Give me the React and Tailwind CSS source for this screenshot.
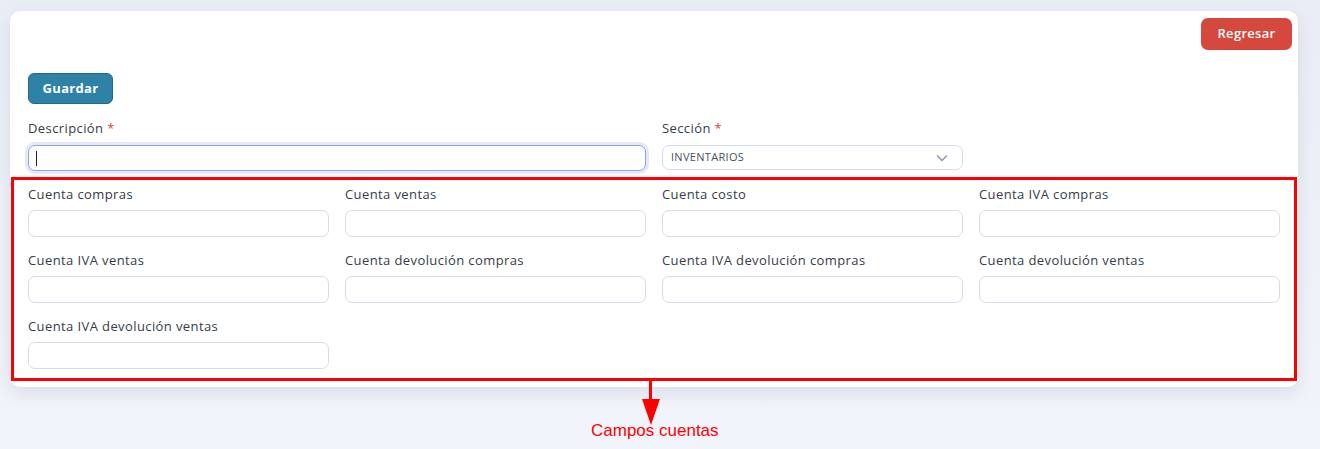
import React from "react";

const cuentas = [
  "Cuenta compras",
  "Cuenta ventas",
  "Cuenta costo",
  "Cuenta IVA compras",
  "Cuenta IVA ventas",
  "Cuenta devolución compras",
  "Cuenta IVA devolución compras",
  "Cuenta devolución ventas",
  "Cuenta IVA devolución ventas",
];

function Field({ label }) {
  return (
    <div className="flex flex-col">
      <label className="text-[13px] font-medium tracking-[0.4px] text-[#363c4a] leading-[18px] h-[18px]">
        {label}
      </label>
      <input
        type="text"
        className="mt-[7px] h-[27px] w-full rounded-[7px] border border-[#d5dcea] bg-white px-2 text-[13px] outline-none"
      />
    </div>
  );
}

export default function App() {
  return (
    <div
      className="relative h-[449px] w-[1320px] overflow-hidden bg-gradient-to-b from-[#eaedf5] to-[#f1f4fa]"
      style={{ fontFamily: '"Open Sans", "Liberation Sans", sans-serif' }}
    >
      <div className="pt-[11px] pl-[10px] pr-[22px]">
        <div className="rounded-[10px] bg-white px-[18px] pt-[7px] pb-[18px] shadow-[0_6px_16px_rgba(120,130,160,0.18)]">
          {/* top actions */}
          <div className="flex justify-end">
            <button className="mr-[-12px] h-[32px] w-[91px] rounded-[7px] bg-[#d4483e] text-[13px] font-semibold tracking-[0.3px] text-white">
              Regresar
            </button>
          </div>
          <div className="mt-[23px]">
            <button className="h-[31px] w-[85px] rounded-[6px] border border-[#24698a] bg-[#2e82a7] text-[13px] font-bold tracking-[0.3px] text-white">
              Guardar
            </button>
          </div>

          {/* descripción / sección */}
          <div className="mt-[15px] grid grid-cols-4 gap-x-[16px]">
            <div className="col-span-2 flex flex-col">
              <label className="text-[13px] font-medium tracking-[0.4px] text-[#363c4a] leading-[18px] h-[18px]">
                Descripción <span className="text-[#e0433a]">*</span>
              </label>
              <div className="mt-[8px] h-[26px] rounded-[7px] border border-[#8fa3ec] bg-white shadow-[0_0_0_3px_#e4e8f8] flex items-center px-[7px]">
                <span className="h-[15px] w-px bg-[#222]" />
              </div>
            </div>
            <div className="flex flex-col">
              <label className="text-[13px] font-medium tracking-[0.4px] text-[#363c4a] leading-[18px] h-[18px]">
                Sección <span className="text-[#e0433a]">*</span>
              </label>
              <div className="mt-[8px] h-[25px] rounded-[7px] border border-[#d5dcea] bg-white flex items-center justify-between pl-[8px] pr-[14px]">
                <span className="text-[11px] text-[#4a5060] tracking-[0.3px]">INVENTARIOS</span>
                <svg width="12" height="8" viewBox="0 0 12 8" fill="none">
                  <path d="M1 1.5l5 5 5-5" stroke="#8d94a4" strokeWidth="1.3" />
                </svg>
              </div>
            </div>
          </div>

          {/* campos cuentas */}
          <div className="mt-[14px] grid grid-cols-4 gap-x-[16px] gap-y-[14px]">
            {cuentas.map((c) => (
              <Field key={c} label={c} />
            ))}
          </div>
        </div>
      </div>

      {/* annotation */}
      <div className="absolute left-[11px] top-[177px] h-[204px] w-[1286px] border-[3px] border-[#ff0000]" />
      <div className="absolute left-[649px] top-[380px] h-[22px] w-[3px] bg-[#ff0000]" />
      <svg className="absolute left-[641px] top-[399px]" width="20" height="26" viewBox="0 0 20 26">
        <polygon points="1,0 19,0 10,26" fill="#ff0000" />
      </svg>
      <div
        className="absolute left-[591px] top-[418px] text-[17px] text-[#ff0000]"
        style={{ fontFamily: '"Liberation Sans", Arial, sans-serif' }}
      >
        Campos cuentas
      </div>
    </div>
  );
}
